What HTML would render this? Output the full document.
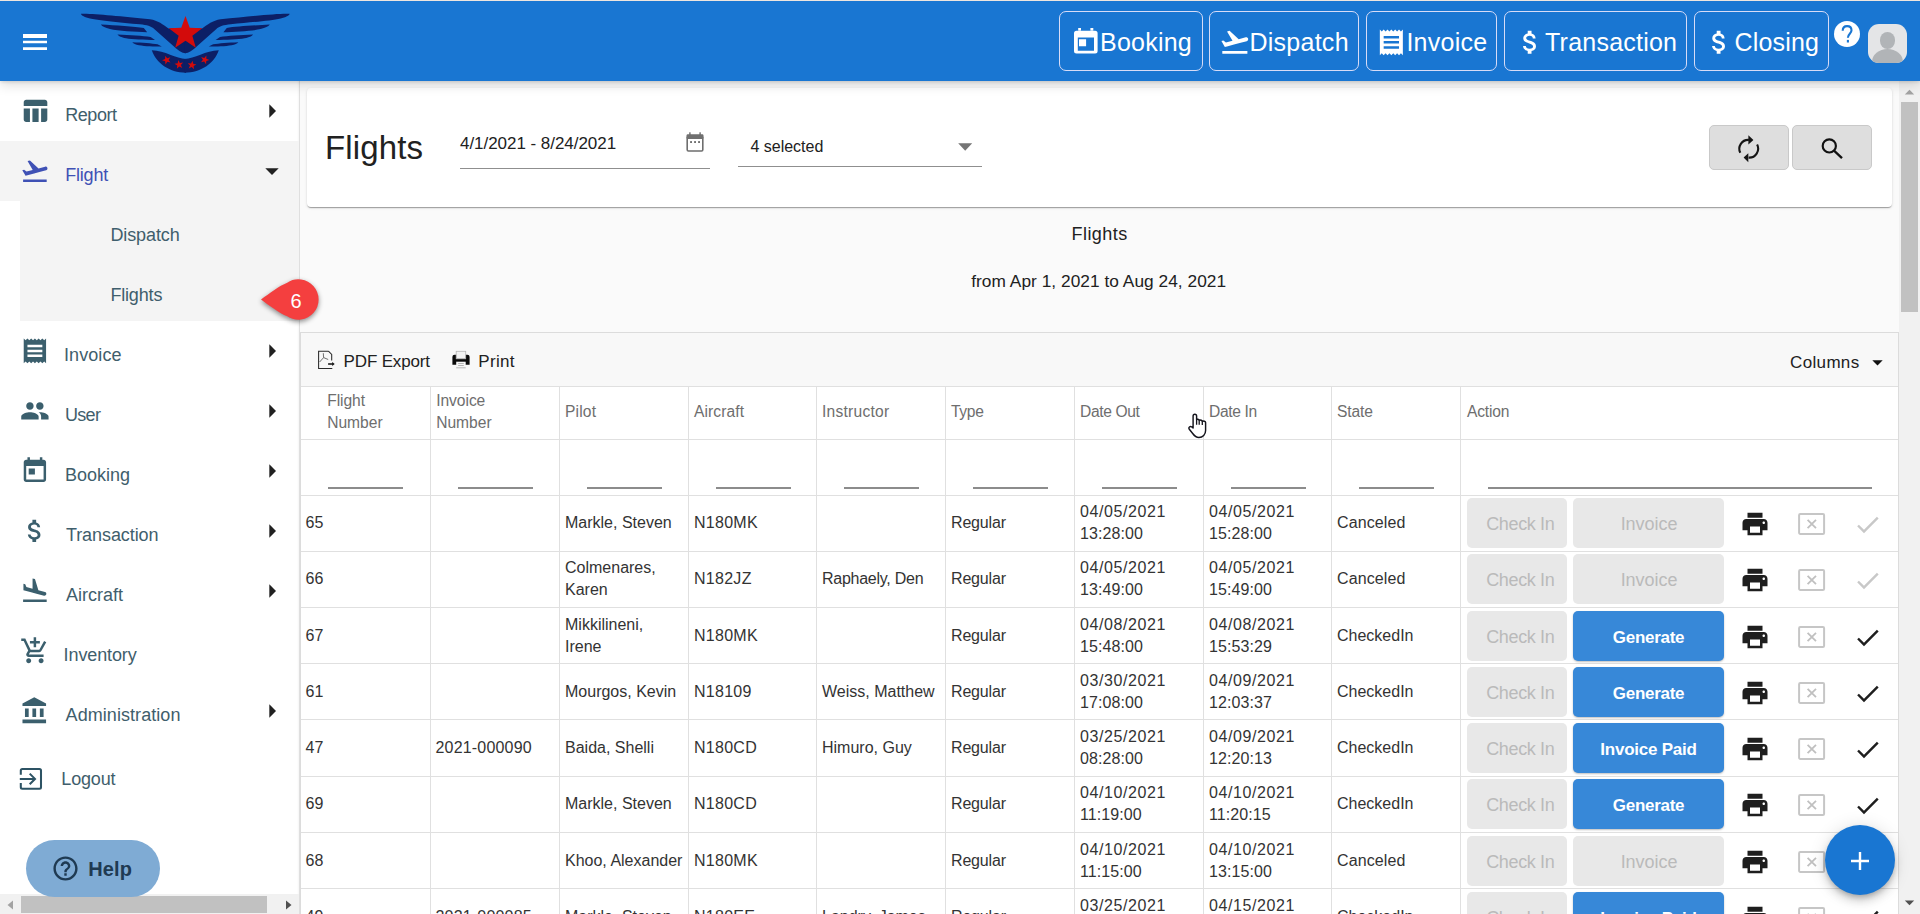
<!DOCTYPE html><html><head><meta charset="utf-8"><title>Flights</title><style>
*{box-sizing:border-box;margin:0;padding:0}
html,body{width:1920px;height:914px;overflow:hidden;background:#fafafa;font-family:"Liberation Sans",sans-serif;position:relative}
.t{position:absolute;white-space:nowrap}
.i{position:absolute;display:block}
.a{position:absolute}
</style></head><body>
<div class="a" style="left:307px;top:88px;width:1585px;height:119px;background:#fff;border-radius:4px;box-shadow:0 2px 1px -1px rgba(0,0,0,.2),0 1px 1px 0 rgba(0,0,0,.14),0 1px 3px 0 rgba(0,0,0,.12)"></div><div class="t" style="left:325.00px;top:130.76px;font-size:33px;line-height:33px;color:#212121;font-weight:400;letter-spacing:0.13px;">Flights</div><div class="t" style="left:460.00px;top:134.81px;font-size:17px;line-height:17px;color:#212121;font-weight:400;letter-spacing:-0.04px;">4/1/2021 - 8/24/2021</div><svg class="i" style="left:686px;top:132px;width:18px;height:20px" viewBox="0 0 18 20"><path d="M1.2 5.2h15.6v12.6c0 .8-.5 1.2-1.2 1.2H2.4c-.8 0-1.2-.5-1.2-1.2z" fill="none" stroke="#6e6e6e" stroke-width="1.6"/><rect x="0.6" y="2.2" width="16.8" height="4.7" rx="1" fill="#707070"/><rect x="3.2" y="0.3" width="1.4" height="3" fill="#6e6e6e"/><rect x="13.4" y="0.3" width="1.4" height="3" fill="#6e6e6e"/><rect x="4.1" y="9.1" width="1.9" height="1.9" fill="#707070"/><rect x="8.1" y="9.1" width="1.9" height="1.9" fill="#707070"/><rect x="12.1" y="9.1" width="1.9" height="1.9" fill="#707070"/></svg><div class="a" style="left:460px;top:167.5px;width:250px;height:1px;background:#8f8f8f"></div><div class="t" style="left:750.40px;top:138.95px;font-size:16px;line-height:16px;color:#212121;font-weight:400;">4 selected</div><svg class="i" style="left:958px;top:142.5px;width:14.5px;height:8px" viewBox="0 0 14.5 8"><path d="M0.2 0.2h14l-7 7.6z" fill="#757575"/></svg><div class="a" style="left:738px;top:165.5px;width:244px;height:1px;background:#8f8f8f"></div><div class="a" style="left:1709px;top:125px;width:80px;height:45px;background:#dedede;border:1px solid #c9c9c9;border-radius:5px"></div><div class="a" style="left:1792px;top:125px;width:80px;height:45px;background:#dedede;border:1px solid #c9c9c9;border-radius:5px"></div><svg class="i" style="left:1736px;top:134px;width:24px;height:30px" viewBox="0 0 24 30"><path d="M4.3,18.8 A8.9,8.9 0 0 1 12.9,5.9" fill="none" stroke="#151515" stroke-width="2.1"/><path d="M12.4,1.3 L17.4,6.1 L12.4,10.5 Z" fill="#151515"/><path d="M21.1,10.6 A8.9,8.9 0 0 1 12.6,23.6" fill="none" stroke="#151515" stroke-width="2.1"/><path d="M12.3,19.3 L7.6,23.6 L12.3,28.2 Z" fill="#151515"/></svg><svg class="i" style="left:1820px;top:137px;width:24px;height:24px" viewBox="0 0 24 24"><circle cx="9.3" cy="8.9" r="6.6" fill="none" stroke="#111" stroke-width="2.15"/><path d="M14 13.6l8 7.6" stroke="#111" stroke-width="2.3"/></svg><div class="t" style="left:799.60px;width:600px;text-align:center;top:224.96px;font-size:18px;line-height:18px;color:#212121;font-weight:400;letter-spacing:0.45px;">Flights</div><div class="t" style="left:798.70px;width:600px;text-align:center;top:272.55px;font-size:17.3px;line-height:17.3px;color:#212121;font-weight:400;letter-spacing:0.04px;">from Apr 1, 2021 to Aug 24, 2021</div>
<div class="a" style="left:300px;top:332px;width:1599px;height:600px;background:#fff;border:1px solid #dcdcdc;border-bottom:none"></div><div class="a" style="left:301px;top:333px;width:1597px;height:54px;background:#f8f8f8;border-bottom:1px solid #e0e0e0"></div><svg class="i" style="left:317px;top:350px;width:19px;height:20px" viewBox="0 0 19 20"><path d="M11.4,1.2 L14.7,4.5 V10.4 M1.6,1.2 H11.4 M1.6,0.7 V18.5 H15.3" fill="none" stroke="#2a2a2a" stroke-width="1.05"/><path d="M6.3,3.2 L6.6,7.6 L2.6,12 M6.6,7.6 L11.2,9.5" fill="none" stroke="#555" stroke-width="0.85"/><path d="M11.1,14 H15.8" stroke="#111" stroke-width="1.5"/><path d="M15.2,11.9 L17.7,14 L15.2,16.1 Z" fill="#111"/></svg><div class="t" style="left:343.60px;top:352.61px;font-size:17px;line-height:17px;color:#212121;font-weight:400;letter-spacing:-0.16px;">PDF Export</div><svg class="i" style="left:446px;top:345px;width:30px;height:30px" viewBox="0 0 30 30"><path d="M6.4,12 Q6.4,9.8 8.6,9.8 H21.4 Q23.6,9.8 23.6,12 V19.7 H6.4 Z" fill="#0a0a0a"/><rect x="10.2" y="6.3" width="9.5" height="7.5" fill="#f3f3f3" stroke="#b5b5b5" stroke-width="0.8"/><rect x="10.2" y="16.7" width="9.5" height="6.7" fill="#f6f6f6"/><path d="M12.2,18.5 H17.8 M12.2,20.5 H17.8" stroke="#9a9a9a" stroke-width="0.7"/><path d="M10.2,22.8 H19.7" stroke="#bdbdbd" stroke-width="1.1"/></svg><div class="t" style="left:478.20px;top:352.61px;font-size:17px;line-height:17px;color:#212121;font-weight:400;letter-spacing:0.35px;">Print</div><div class="t" style="left:1790.10px;top:354.21px;font-size:17px;line-height:17px;color:#212121;font-weight:400;letter-spacing:0.33px;">Columns</div><svg class="i" style="left:1871.5px;top:359.5px;width:11px;height:6px" viewBox="0 0 11 6"><path d="M0.3 0.2h10.4L5.5 5.6z" fill="#111"/></svg><div class="a" style="left:301px;top:439.0px;width:1597px;height:1px;background:#e0e0e0"></div><div class="a" style="left:301px;top:495.0px;width:1597px;height:1px;background:#e0e0e0"></div><div class="a" style="left:301px;top:551.0px;width:1597px;height:1px;background:#e0e0e0"></div><div class="a" style="left:301px;top:607.0px;width:1597px;height:1px;background:#e0e0e0"></div><div class="a" style="left:301px;top:663.0px;width:1597px;height:1px;background:#e0e0e0"></div><div class="a" style="left:301px;top:719.0px;width:1597px;height:1px;background:#e0e0e0"></div><div class="a" style="left:301px;top:776.0px;width:1597px;height:1px;background:#e0e0e0"></div><div class="a" style="left:301px;top:832.0px;width:1597px;height:1px;background:#e0e0e0"></div><div class="a" style="left:301px;top:888.0px;width:1597px;height:1px;background:#e0e0e0"></div><div class="a" style="left:301px;top:944.0px;width:1597px;height:1px;background:#e0e0e0"></div><div class="a" style="left:429.5px;top:387px;width:1px;height:530px;background:#e0e0e0"></div><div class="a" style="left:559.0px;top:387px;width:1px;height:530px;background:#e0e0e0"></div><div class="a" style="left:688.0px;top:387px;width:1px;height:530px;background:#e0e0e0"></div><div class="a" style="left:816.0px;top:387px;width:1px;height:530px;background:#e0e0e0"></div><div class="a" style="left:945.0px;top:387px;width:1px;height:530px;background:#e0e0e0"></div><div class="a" style="left:1074.0px;top:387px;width:1px;height:530px;background:#e0e0e0"></div><div class="a" style="left:1203.0px;top:387px;width:1px;height:530px;background:#e0e0e0"></div><div class="a" style="left:1331.0px;top:387px;width:1px;height:530px;background:#e0e0e0"></div><div class="a" style="left:1459.5px;top:387px;width:1px;height:530px;background:#e0e0e0"></div><div class="t" style="left:327.20px;top:393.29px;font-size:15.6px;line-height:15.6px;color:#6e6e6e;font-weight:400;letter-spacing:-0.05px;">Flight</div><div class="t" style="left:327.20px;top:414.79px;font-size:15.6px;line-height:15.6px;color:#6e6e6e;font-weight:400;letter-spacing:-0.01px;">Number</div><div class="t" style="left:436.20px;top:393.29px;font-size:15.6px;line-height:15.6px;color:#6e6e6e;font-weight:400;letter-spacing:-0.05px;">Invoice</div><div class="t" style="left:436.20px;top:414.79px;font-size:15.6px;line-height:15.6px;color:#6e6e6e;font-weight:400;letter-spacing:-0.01px;">Number</div><div class="t" style="left:565.00px;top:404.29px;font-size:15.6px;line-height:15.6px;color:#6e6e6e;font-weight:400;letter-spacing:0.17px;">Pilot</div><div class="t" style="left:694.00px;top:404.29px;font-size:15.6px;line-height:15.6px;color:#6e6e6e;font-weight:400;letter-spacing:0.09px;">Aircraft</div><div class="t" style="left:822.00px;top:404.29px;font-size:15.6px;line-height:15.6px;color:#6e6e6e;font-weight:400;letter-spacing:0.24px;">Instructor</div><div class="t" style="left:951.00px;top:404.29px;font-size:15.6px;line-height:15.6px;color:#6e6e6e;font-weight:400;letter-spacing:-0.32px;">Type</div><div class="t" style="left:1080.00px;top:404.29px;font-size:15.6px;line-height:15.6px;color:#6e6e6e;font-weight:400;letter-spacing:-0.36px;">Date Out</div><div class="t" style="left:1209.00px;top:404.29px;font-size:15.6px;line-height:15.6px;color:#6e6e6e;font-weight:400;letter-spacing:-0.35px;">Date In</div><div class="t" style="left:1337.00px;top:404.29px;font-size:15.6px;line-height:15.6px;color:#6e6e6e;font-weight:400;letter-spacing:-0.1px;">State</div><div class="t" style="left:1467.00px;top:404.29px;font-size:15.6px;line-height:15.6px;color:#6e6e6e;font-weight:400;letter-spacing:-0.2px;">Action</div><div class="a" style="left:327.5px;top:487.3px;width:75px;height:1.4px;background:#8c8c8c"></div><div class="a" style="left:457.5px;top:487.3px;width:75px;height:1.4px;background:#8c8c8c"></div><div class="a" style="left:587.0px;top:487.3px;width:75px;height:1.4px;background:#8c8c8c"></div><div class="a" style="left:716.0px;top:487.3px;width:75px;height:1.4px;background:#8c8c8c"></div><div class="a" style="left:844.0px;top:487.3px;width:75px;height:1.4px;background:#8c8c8c"></div><div class="a" style="left:973.0px;top:487.3px;width:75px;height:1.4px;background:#8c8c8c"></div><div class="a" style="left:1102.0px;top:487.3px;width:75px;height:1.4px;background:#8c8c8c"></div><div class="a" style="left:1231.0px;top:487.3px;width:75px;height:1.4px;background:#8c8c8c"></div><div class="a" style="left:1359.0px;top:487.3px;width:75px;height:1.4px;background:#8c8c8c"></div><div class="a" style="left:1487.5px;top:487.3px;width:384.5px;height:1.4px;background:#8c8c8c"></div><div class="t" style="left:305.50px;top:514.85px;font-size:16px;line-height:16px;color:#333333;font-weight:400;letter-spacing:0px;">65</div><div class="t" style="left:565.00px;top:514.85px;font-size:16px;line-height:16px;color:#333333;font-weight:400;letter-spacing:0px;">Markle, Steven</div><div class="t" style="left:694.00px;top:514.85px;font-size:16px;line-height:16px;color:#333333;font-weight:400;letter-spacing:0.28px;">N180MK</div><div class="t" style="left:951.00px;top:514.85px;font-size:16px;line-height:16px;color:#333333;font-weight:400;letter-spacing:-0.17px;">Regular</div><div class="t" style="left:1080.00px;top:503.85px;font-size:16px;line-height:16px;color:#333333;font-weight:400;letter-spacing:0.6px;">04/05/2021</div><div class="t" style="left:1080.00px;top:525.85px;font-size:16px;line-height:16px;color:#333333;font-weight:400;letter-spacing:0.09px;">13:28:00</div><div class="t" style="left:1209.00px;top:503.85px;font-size:16px;line-height:16px;color:#333333;font-weight:400;letter-spacing:0.6px;">04/05/2021</div><div class="t" style="left:1209.00px;top:525.85px;font-size:16px;line-height:16px;color:#333333;font-weight:400;letter-spacing:0.09px;">15:28:00</div><div class="t" style="left:1337.00px;top:514.85px;font-size:16px;line-height:16px;color:#333333;font-weight:400;letter-spacing:0.1px;">Canceled</div><div class="a" style="left:1467px;top:497.8px;width:100px;height:50.3px;background:#e8e8e8;border-radius:5px"></div><div class="t" style="left:1470.30px;width:100px;text-align:center;top:515.16px;font-size:18px;line-height:18px;color:#bababa;font-weight:400;letter-spacing:-0.34px;">Check In</div><div class="a" style="left:1573px;top:497.8px;width:151px;height:50.3px;background:#e8e8e8;border-radius:5px"></div><div class="t" style="left:1573.50px;width:151px;text-align:center;top:515.16px;font-size:18px;line-height:18px;color:#bababa;font-weight:400;letter-spacing:-0.05px;">Invoice</div><svg class="i" style="left:1740.00px;top:509.25px;width:30px;height:30px;" viewBox="0 0 24 24"><path fill="#1e1e1e" d="M19 8H5c-1.66 0-3 1.34-3 3v6h4v4h12v-4h4v-6c0-1.66-1.34-3-3-3zm-3 11H8v-5h8v5zm3-7c-.55 0-1-.45-1-1s.45-1 1-1 1 .45 1 1-.45 1-1 1zm-1-9H6v4h12V3z"/></svg><svg class="i" style="left:1797.5px;top:513.2px;width:28px;height:22px" viewBox="0 0 28 22"><rect x="1.1" y="1" width="25" height="20" rx="1.2" fill="none" stroke="#c6c6c6" stroke-width="2"/><path d="M9.6 6.8l8.4 8.4M18 6.8l-8.4 8.4" stroke="#c0c0c0" stroke-width="1.8"/></svg><svg class="i" style="left:1853.30px;top:509.50px;width:29.3px;height:29.3px;" viewBox="0 0 24 24"><path fill="#c8c8c8" d="M9 16.17L4.83 12l-1.42 1.41L9 19 21 7l-1.41-1.41z"/></svg><div class="t" style="left:305.50px;top:570.85px;font-size:16px;line-height:16px;color:#333333;font-weight:400;letter-spacing:0px;">66</div><div class="t" style="left:565.00px;top:559.85px;font-size:16px;line-height:16px;color:#333333;font-weight:400;">Colmenares,</div><div class="t" style="left:565.00px;top:581.85px;font-size:16px;line-height:16px;color:#333333;font-weight:400;">Karen</div><div class="t" style="left:694.00px;top:570.85px;font-size:16px;line-height:16px;color:#333333;font-weight:400;letter-spacing:0.28px;">N182JZ</div><div class="t" style="left:822.00px;top:570.85px;font-size:16px;line-height:16px;color:#333333;font-weight:400;letter-spacing:-0.26px;">Raphaely, Den</div><div class="t" style="left:951.00px;top:570.85px;font-size:16px;line-height:16px;color:#333333;font-weight:400;letter-spacing:-0.17px;">Regular</div><div class="t" style="left:1080.00px;top:559.85px;font-size:16px;line-height:16px;color:#333333;font-weight:400;letter-spacing:0.6px;">04/05/2021</div><div class="t" style="left:1080.00px;top:581.85px;font-size:16px;line-height:16px;color:#333333;font-weight:400;letter-spacing:0.09px;">13:49:00</div><div class="t" style="left:1209.00px;top:559.85px;font-size:16px;line-height:16px;color:#333333;font-weight:400;letter-spacing:0.6px;">04/05/2021</div><div class="t" style="left:1209.00px;top:581.85px;font-size:16px;line-height:16px;color:#333333;font-weight:400;letter-spacing:0.09px;">15:49:00</div><div class="t" style="left:1337.00px;top:570.85px;font-size:16px;line-height:16px;color:#333333;font-weight:400;letter-spacing:0.1px;">Canceled</div><div class="a" style="left:1467px;top:553.8px;width:100px;height:50.3px;background:#e8e8e8;border-radius:5px"></div><div class="t" style="left:1470.30px;width:100px;text-align:center;top:571.16px;font-size:18px;line-height:18px;color:#bababa;font-weight:400;letter-spacing:-0.34px;">Check In</div><div class="a" style="left:1573px;top:553.8px;width:151px;height:50.3px;background:#e8e8e8;border-radius:5px"></div><div class="t" style="left:1573.50px;width:151px;text-align:center;top:571.16px;font-size:18px;line-height:18px;color:#bababa;font-weight:400;letter-spacing:-0.05px;">Invoice</div><svg class="i" style="left:1740.00px;top:565.25px;width:30px;height:30px;" viewBox="0 0 24 24"><path fill="#1e1e1e" d="M19 8H5c-1.66 0-3 1.34-3 3v6h4v4h12v-4h4v-6c0-1.66-1.34-3-3-3zm-3 11H8v-5h8v5zm3-7c-.55 0-1-.45-1-1s.45-1 1-1 1 .45 1 1-.45 1-1 1zm-1-9H6v4h12V3z"/></svg><svg class="i" style="left:1797.5px;top:569.2px;width:28px;height:22px" viewBox="0 0 28 22"><rect x="1.1" y="1" width="25" height="20" rx="1.2" fill="none" stroke="#c6c6c6" stroke-width="2"/><path d="M9.6 6.8l8.4 8.4M18 6.8l-8.4 8.4" stroke="#c0c0c0" stroke-width="1.8"/></svg><svg class="i" style="left:1853.30px;top:565.50px;width:29.3px;height:29.3px;" viewBox="0 0 24 24"><path fill="#c8c8c8" d="M9 16.17L4.83 12l-1.42 1.41L9 19 21 7l-1.41-1.41z"/></svg><div class="t" style="left:305.50px;top:627.85px;font-size:16px;line-height:16px;color:#333333;font-weight:400;letter-spacing:0px;">67</div><div class="t" style="left:565.00px;top:616.85px;font-size:16px;line-height:16px;color:#333333;font-weight:400;">Mikkilineni,</div><div class="t" style="left:565.00px;top:638.85px;font-size:16px;line-height:16px;color:#333333;font-weight:400;">Irene</div><div class="t" style="left:694.00px;top:627.85px;font-size:16px;line-height:16px;color:#333333;font-weight:400;letter-spacing:0.28px;">N180MK</div><div class="t" style="left:951.00px;top:627.85px;font-size:16px;line-height:16px;color:#333333;font-weight:400;letter-spacing:-0.17px;">Regular</div><div class="t" style="left:1080.00px;top:616.85px;font-size:16px;line-height:16px;color:#333333;font-weight:400;letter-spacing:0.6px;">04/08/2021</div><div class="t" style="left:1080.00px;top:638.85px;font-size:16px;line-height:16px;color:#333333;font-weight:400;letter-spacing:0.09px;">15:48:00</div><div class="t" style="left:1209.00px;top:616.85px;font-size:16px;line-height:16px;color:#333333;font-weight:400;letter-spacing:0.6px;">04/08/2021</div><div class="t" style="left:1209.00px;top:638.85px;font-size:16px;line-height:16px;color:#333333;font-weight:400;letter-spacing:0.09px;">15:53:29</div><div class="t" style="left:1337.00px;top:627.85px;font-size:16px;line-height:16px;color:#333333;font-weight:400;letter-spacing:0px;">CheckedIn</div><div class="a" style="left:1467px;top:610.8px;width:100px;height:50.3px;background:#e8e8e8;border-radius:5px"></div><div class="t" style="left:1470.30px;width:100px;text-align:center;top:628.16px;font-size:18px;line-height:18px;color:#bababa;font-weight:400;letter-spacing:-0.34px;">Check In</div><div class="a" style="left:1573px;top:610.8px;width:151px;height:50.3px;background:#3788d8;border-radius:5px;box-shadow:0 1px 2px rgba(0,0,0,.25)"></div><div class="t" style="left:1573.00px;width:151px;text-align:center;top:628.61px;font-size:17px;line-height:17px;color:#ffffff;font-weight:700;letter-spacing:-0.29px;">Generate</div><svg class="i" style="left:1740.00px;top:622.25px;width:30px;height:30px;" viewBox="0 0 24 24"><path fill="#1e1e1e" d="M19 8H5c-1.66 0-3 1.34-3 3v6h4v4h12v-4h4v-6c0-1.66-1.34-3-3-3zm-3 11H8v-5h8v5zm3-7c-.55 0-1-.45-1-1s.45-1 1-1 1 .45 1 1-.45 1-1 1zm-1-9H6v4h12V3z"/></svg><svg class="i" style="left:1797.5px;top:626.2px;width:28px;height:22px" viewBox="0 0 28 22"><rect x="1.1" y="1" width="25" height="20" rx="1.2" fill="none" stroke="#c6c6c6" stroke-width="2"/><path d="M9.6 6.8l8.4 8.4M18 6.8l-8.4 8.4" stroke="#c0c0c0" stroke-width="1.8"/></svg><svg class="i" style="left:1853.30px;top:622.50px;width:29.3px;height:29.3px;" viewBox="0 0 24 24"><path fill="#1e1e1e" d="M9 16.17L4.83 12l-1.42 1.41L9 19 21 7l-1.41-1.41z"/></svg><div class="t" style="left:305.50px;top:683.85px;font-size:16px;line-height:16px;color:#333333;font-weight:400;letter-spacing:0px;">61</div><div class="t" style="left:565.00px;top:683.85px;font-size:16px;line-height:16px;color:#333333;font-weight:400;letter-spacing:0px;">Mourgos, Kevin</div><div class="t" style="left:694.00px;top:683.85px;font-size:16px;line-height:16px;color:#333333;font-weight:400;letter-spacing:0.28px;">N18109</div><div class="t" style="left:822.00px;top:683.85px;font-size:16px;line-height:16px;color:#333333;font-weight:400;letter-spacing:0px;">Weiss, Matthew</div><div class="t" style="left:951.00px;top:683.85px;font-size:16px;line-height:16px;color:#333333;font-weight:400;letter-spacing:-0.17px;">Regular</div><div class="t" style="left:1080.00px;top:672.85px;font-size:16px;line-height:16px;color:#333333;font-weight:400;letter-spacing:0.6px;">03/30/2021</div><div class="t" style="left:1080.00px;top:694.85px;font-size:16px;line-height:16px;color:#333333;font-weight:400;letter-spacing:0.09px;">17:08:00</div><div class="t" style="left:1209.00px;top:672.85px;font-size:16px;line-height:16px;color:#333333;font-weight:400;letter-spacing:0.6px;">04/09/2021</div><div class="t" style="left:1209.00px;top:694.85px;font-size:16px;line-height:16px;color:#333333;font-weight:400;letter-spacing:0.09px;">12:03:37</div><div class="t" style="left:1337.00px;top:683.85px;font-size:16px;line-height:16px;color:#333333;font-weight:400;letter-spacing:0px;">CheckedIn</div><div class="a" style="left:1467px;top:666.8px;width:100px;height:50.3px;background:#e8e8e8;border-radius:5px"></div><div class="t" style="left:1470.30px;width:100px;text-align:center;top:684.16px;font-size:18px;line-height:18px;color:#bababa;font-weight:400;letter-spacing:-0.34px;">Check In</div><div class="a" style="left:1573px;top:666.8px;width:151px;height:50.3px;background:#3788d8;border-radius:5px;box-shadow:0 1px 2px rgba(0,0,0,.25)"></div><div class="t" style="left:1573.00px;width:151px;text-align:center;top:684.61px;font-size:17px;line-height:17px;color:#ffffff;font-weight:700;letter-spacing:-0.29px;">Generate</div><svg class="i" style="left:1740.00px;top:678.25px;width:30px;height:30px;" viewBox="0 0 24 24"><path fill="#1e1e1e" d="M19 8H5c-1.66 0-3 1.34-3 3v6h4v4h12v-4h4v-6c0-1.66-1.34-3-3-3zm-3 11H8v-5h8v5zm3-7c-.55 0-1-.45-1-1s.45-1 1-1 1 .45 1 1-.45 1-1 1zm-1-9H6v4h12V3z"/></svg><svg class="i" style="left:1797.5px;top:682.2px;width:28px;height:22px" viewBox="0 0 28 22"><rect x="1.1" y="1" width="25" height="20" rx="1.2" fill="none" stroke="#c6c6c6" stroke-width="2"/><path d="M9.6 6.8l8.4 8.4M18 6.8l-8.4 8.4" stroke="#c0c0c0" stroke-width="1.8"/></svg><svg class="i" style="left:1853.30px;top:678.50px;width:29.3px;height:29.3px;" viewBox="0 0 24 24"><path fill="#1e1e1e" d="M9 16.17L4.83 12l-1.42 1.41L9 19 21 7l-1.41-1.41z"/></svg><div class="t" style="left:305.50px;top:739.85px;font-size:16px;line-height:16px;color:#333333;font-weight:400;letter-spacing:0px;">47</div><div class="t" style="left:435.50px;top:739.85px;font-size:16px;line-height:16px;color:#333333;font-weight:400;letter-spacing:0.18px;">2021-000090</div><div class="t" style="left:565.00px;top:739.85px;font-size:16px;line-height:16px;color:#333333;font-weight:400;letter-spacing:0px;">Baida, Shelli</div><div class="t" style="left:694.00px;top:739.85px;font-size:16px;line-height:16px;color:#333333;font-weight:400;letter-spacing:0.28px;">N180CD</div><div class="t" style="left:822.00px;top:739.85px;font-size:16px;line-height:16px;color:#333333;font-weight:400;letter-spacing:0px;">Himuro, Guy</div><div class="t" style="left:951.00px;top:739.85px;font-size:16px;line-height:16px;color:#333333;font-weight:400;letter-spacing:-0.17px;">Regular</div><div class="t" style="left:1080.00px;top:728.85px;font-size:16px;line-height:16px;color:#333333;font-weight:400;letter-spacing:0.6px;">03/25/2021</div><div class="t" style="left:1080.00px;top:750.85px;font-size:16px;line-height:16px;color:#333333;font-weight:400;letter-spacing:0.09px;">08:28:00</div><div class="t" style="left:1209.00px;top:728.85px;font-size:16px;line-height:16px;color:#333333;font-weight:400;letter-spacing:0.6px;">04/09/2021</div><div class="t" style="left:1209.00px;top:750.85px;font-size:16px;line-height:16px;color:#333333;font-weight:400;letter-spacing:0.09px;">12:20:13</div><div class="t" style="left:1337.00px;top:739.85px;font-size:16px;line-height:16px;color:#333333;font-weight:400;letter-spacing:0px;">CheckedIn</div><div class="a" style="left:1467px;top:722.8px;width:100px;height:50.3px;background:#e8e8e8;border-radius:5px"></div><div class="t" style="left:1470.30px;width:100px;text-align:center;top:740.16px;font-size:18px;line-height:18px;color:#bababa;font-weight:400;letter-spacing:-0.34px;">Check In</div><div class="a" style="left:1573px;top:722.8px;width:151px;height:50.3px;background:#3788d8;border-radius:5px;box-shadow:0 1px 2px rgba(0,0,0,.25)"></div><div class="t" style="left:1573.00px;width:151px;text-align:center;top:740.61px;font-size:17px;line-height:17px;color:#ffffff;font-weight:700;letter-spacing:-0.23px;">Invoice Paid</div><svg class="i" style="left:1740.00px;top:734.25px;width:30px;height:30px;" viewBox="0 0 24 24"><path fill="#1e1e1e" d="M19 8H5c-1.66 0-3 1.34-3 3v6h4v4h12v-4h4v-6c0-1.66-1.34-3-3-3zm-3 11H8v-5h8v5zm3-7c-.55 0-1-.45-1-1s.45-1 1-1 1 .45 1 1-.45 1-1 1zm-1-9H6v4h12V3z"/></svg><svg class="i" style="left:1797.5px;top:738.2px;width:28px;height:22px" viewBox="0 0 28 22"><rect x="1.1" y="1" width="25" height="20" rx="1.2" fill="none" stroke="#c6c6c6" stroke-width="2"/><path d="M9.6 6.8l8.4 8.4M18 6.8l-8.4 8.4" stroke="#c0c0c0" stroke-width="1.8"/></svg><svg class="i" style="left:1853.30px;top:734.50px;width:29.3px;height:29.3px;" viewBox="0 0 24 24"><path fill="#1e1e1e" d="M9 16.17L4.83 12l-1.42 1.41L9 19 21 7l-1.41-1.41z"/></svg><div class="t" style="left:305.50px;top:795.85px;font-size:16px;line-height:16px;color:#333333;font-weight:400;letter-spacing:0px;">69</div><div class="t" style="left:565.00px;top:795.85px;font-size:16px;line-height:16px;color:#333333;font-weight:400;letter-spacing:0px;">Markle, Steven</div><div class="t" style="left:694.00px;top:795.85px;font-size:16px;line-height:16px;color:#333333;font-weight:400;letter-spacing:0.28px;">N180CD</div><div class="t" style="left:951.00px;top:795.85px;font-size:16px;line-height:16px;color:#333333;font-weight:400;letter-spacing:-0.17px;">Regular</div><div class="t" style="left:1080.00px;top:784.85px;font-size:16px;line-height:16px;color:#333333;font-weight:400;letter-spacing:0.6px;">04/10/2021</div><div class="t" style="left:1080.00px;top:806.85px;font-size:16px;line-height:16px;color:#333333;font-weight:400;letter-spacing:0.09px;">11:19:00</div><div class="t" style="left:1209.00px;top:784.85px;font-size:16px;line-height:16px;color:#333333;font-weight:400;letter-spacing:0.6px;">04/10/2021</div><div class="t" style="left:1209.00px;top:806.85px;font-size:16px;line-height:16px;color:#333333;font-weight:400;letter-spacing:0.09px;">11:20:15</div><div class="t" style="left:1337.00px;top:795.85px;font-size:16px;line-height:16px;color:#333333;font-weight:400;letter-spacing:0px;">CheckedIn</div><div class="a" style="left:1467px;top:778.8px;width:100px;height:50.3px;background:#e8e8e8;border-radius:5px"></div><div class="t" style="left:1470.30px;width:100px;text-align:center;top:796.16px;font-size:18px;line-height:18px;color:#bababa;font-weight:400;letter-spacing:-0.34px;">Check In</div><div class="a" style="left:1573px;top:778.8px;width:151px;height:50.3px;background:#3788d8;border-radius:5px;box-shadow:0 1px 2px rgba(0,0,0,.25)"></div><div class="t" style="left:1573.00px;width:151px;text-align:center;top:796.61px;font-size:17px;line-height:17px;color:#ffffff;font-weight:700;letter-spacing:-0.29px;">Generate</div><svg class="i" style="left:1740.00px;top:790.25px;width:30px;height:30px;" viewBox="0 0 24 24"><path fill="#1e1e1e" d="M19 8H5c-1.66 0-3 1.34-3 3v6h4v4h12v-4h4v-6c0-1.66-1.34-3-3-3zm-3 11H8v-5h8v5zm3-7c-.55 0-1-.45-1-1s.45-1 1-1 1 .45 1 1-.45 1-1 1zm-1-9H6v4h12V3z"/></svg><svg class="i" style="left:1797.5px;top:794.2px;width:28px;height:22px" viewBox="0 0 28 22"><rect x="1.1" y="1" width="25" height="20" rx="1.2" fill="none" stroke="#c6c6c6" stroke-width="2"/><path d="M9.6 6.8l8.4 8.4M18 6.8l-8.4 8.4" stroke="#c0c0c0" stroke-width="1.8"/></svg><svg class="i" style="left:1853.30px;top:790.50px;width:29.3px;height:29.3px;" viewBox="0 0 24 24"><path fill="#1e1e1e" d="M9 16.17L4.83 12l-1.42 1.41L9 19 21 7l-1.41-1.41z"/></svg><div class="t" style="left:305.50px;top:852.85px;font-size:16px;line-height:16px;color:#333333;font-weight:400;letter-spacing:0px;">68</div><div class="t" style="left:565.00px;top:852.85px;font-size:16px;line-height:16px;color:#333333;font-weight:400;letter-spacing:0px;">Khoo, Alexander</div><div class="t" style="left:694.00px;top:852.85px;font-size:16px;line-height:16px;color:#333333;font-weight:400;letter-spacing:0.28px;">N180MK</div><div class="t" style="left:951.00px;top:852.85px;font-size:16px;line-height:16px;color:#333333;font-weight:400;letter-spacing:-0.17px;">Regular</div><div class="t" style="left:1080.00px;top:841.85px;font-size:16px;line-height:16px;color:#333333;font-weight:400;letter-spacing:0.6px;">04/10/2021</div><div class="t" style="left:1080.00px;top:863.85px;font-size:16px;line-height:16px;color:#333333;font-weight:400;letter-spacing:0.09px;">11:15:00</div><div class="t" style="left:1209.00px;top:841.85px;font-size:16px;line-height:16px;color:#333333;font-weight:400;letter-spacing:0.6px;">04/10/2021</div><div class="t" style="left:1209.00px;top:863.85px;font-size:16px;line-height:16px;color:#333333;font-weight:400;letter-spacing:0.09px;">13:15:00</div><div class="t" style="left:1337.00px;top:852.85px;font-size:16px;line-height:16px;color:#333333;font-weight:400;letter-spacing:0.1px;">Canceled</div><div class="a" style="left:1467px;top:835.8px;width:100px;height:50.3px;background:#e8e8e8;border-radius:5px"></div><div class="t" style="left:1470.30px;width:100px;text-align:center;top:853.16px;font-size:18px;line-height:18px;color:#bababa;font-weight:400;letter-spacing:-0.34px;">Check In</div><div class="a" style="left:1573px;top:835.8px;width:151px;height:50.3px;background:#e8e8e8;border-radius:5px"></div><div class="t" style="left:1573.50px;width:151px;text-align:center;top:853.16px;font-size:18px;line-height:18px;color:#bababa;font-weight:400;letter-spacing:-0.05px;">Invoice</div><svg class="i" style="left:1740.00px;top:847.25px;width:30px;height:30px;" viewBox="0 0 24 24"><path fill="#1e1e1e" d="M19 8H5c-1.66 0-3 1.34-3 3v6h4v4h12v-4h4v-6c0-1.66-1.34-3-3-3zm-3 11H8v-5h8v5zm3-7c-.55 0-1-.45-1-1s.45-1 1-1 1 .45 1 1-.45 1-1 1zm-1-9H6v4h12V3z"/></svg><svg class="i" style="left:1797.5px;top:851.2px;width:28px;height:22px" viewBox="0 0 28 22"><rect x="1.1" y="1" width="25" height="20" rx="1.2" fill="none" stroke="#c6c6c6" stroke-width="2"/><path d="M9.6 6.8l8.4 8.4M18 6.8l-8.4 8.4" stroke="#c0c0c0" stroke-width="1.8"/></svg><svg class="i" style="left:1853.30px;top:847.50px;width:29.3px;height:29.3px;" viewBox="0 0 24 24"><path fill="#1e1e1e" d="M9 16.17L4.83 12l-1.42 1.41L9 19 21 7l-1.41-1.41z"/></svg><div class="t" style="left:305.50px;top:908.85px;font-size:16px;line-height:16px;color:#333333;font-weight:400;letter-spacing:0px;">49</div><div class="t" style="left:435.50px;top:908.85px;font-size:16px;line-height:16px;color:#333333;font-weight:400;letter-spacing:0.18px;">2021-000085</div><div class="t" style="left:565.00px;top:908.85px;font-size:16px;line-height:16px;color:#333333;font-weight:400;letter-spacing:0px;">Markle, Steven</div><div class="t" style="left:694.00px;top:908.85px;font-size:16px;line-height:16px;color:#333333;font-weight:400;letter-spacing:0.28px;">N180EE</div><div class="t" style="left:822.00px;top:908.85px;font-size:16px;line-height:16px;color:#333333;font-weight:400;letter-spacing:0px;">Landry, James</div><div class="t" style="left:951.00px;top:908.85px;font-size:16px;line-height:16px;color:#333333;font-weight:400;letter-spacing:-0.17px;">Regular</div><div class="t" style="left:1080.00px;top:897.85px;font-size:16px;line-height:16px;color:#333333;font-weight:400;letter-spacing:0.6px;">03/25/2021</div><div class="t" style="left:1080.00px;top:919.85px;font-size:16px;line-height:16px;color:#333333;font-weight:400;letter-spacing:0.09px;">08:28:00</div><div class="t" style="left:1209.00px;top:897.85px;font-size:16px;line-height:16px;color:#333333;font-weight:400;letter-spacing:0.6px;">04/15/2021</div><div class="t" style="left:1209.00px;top:919.85px;font-size:16px;line-height:16px;color:#333333;font-weight:400;letter-spacing:0.09px;">12:20:13</div><div class="t" style="left:1337.00px;top:908.85px;font-size:16px;line-height:16px;color:#333333;font-weight:400;letter-spacing:0px;">CheckedIn</div><div class="a" style="left:1467px;top:891.8px;width:100px;height:50.3px;background:#e8e8e8;border-radius:5px"></div><div class="t" style="left:1470.30px;width:100px;text-align:center;top:909.16px;font-size:18px;line-height:18px;color:#bababa;font-weight:400;letter-spacing:-0.34px;">Check In</div><div class="a" style="left:1573px;top:891.8px;width:151px;height:50.3px;background:#3788d8;border-radius:5px;box-shadow:0 1px 2px rgba(0,0,0,.25)"></div><div class="t" style="left:1573.00px;width:151px;text-align:center;top:909.61px;font-size:17px;line-height:17px;color:#ffffff;font-weight:700;letter-spacing:-0.23px;">Invoice Paid</div><svg class="i" style="left:1740.00px;top:903.25px;width:30px;height:30px;" viewBox="0 0 24 24"><path fill="#1e1e1e" d="M19 8H5c-1.66 0-3 1.34-3 3v6h4v4h12v-4h4v-6c0-1.66-1.34-3-3-3zm-3 11H8v-5h8v5zm3-7c-.55 0-1-.45-1-1s.45-1 1-1 1 .45 1 1-.45 1-1 1zm-1-9H6v4h12V3z"/></svg><svg class="i" style="left:1797.5px;top:907.2px;width:28px;height:22px" viewBox="0 0 28 22"><rect x="1.1" y="1" width="25" height="20" rx="1.2" fill="none" stroke="#c6c6c6" stroke-width="2"/><path d="M9.6 6.8l8.4 8.4M18 6.8l-8.4 8.4" stroke="#c0c0c0" stroke-width="1.8"/></svg><svg class="i" style="left:1853.30px;top:903.50px;width:29.3px;height:29.3px;" viewBox="0 0 24 24"><path fill="#1e1e1e" d="M9 16.17L4.83 12l-1.42 1.41L9 19 21 7l-1.41-1.41z"/></svg>
<div class="a" style="left:0;top:81px;width:300px;height:833px;background:#fff;border-right:1px solid #dfdfdf;box-shadow:inset -2px 0 2px -1px rgba(0,0,0,.04)"></div>
<div class="a" style="left:0;top:141px;width:299px;height:60px;background:#f4f4f4"></div><div class="a" style="left:20px;top:201px;width:279px;height:120px;background:#f4f4f4"></div><svg class="i" style="left:20.30px;top:95.80px;width:29.8px;height:29.8px;" viewBox="0 0 24 24"><path fill="#3b5f6d" d="M10 10.02h5V21h-5zM17 21h3c1.1 0 2-.9 2-2v-9h-5v11zm3-18H5c-1.1 0-2 .9-2 2v3h19V5c0-1.1-.9-2-2-2zM3 19c0 1.1.9 2 2 2h3V10H3v9z"/></svg><div class="t" style="left:65.20px;top:106.16px;font-size:18px;line-height:18px;color:#3f5e6c;font-weight:400;letter-spacing:-0.44px;">Report</div><svg class="i" style="left:255.50px;top:95.00px;width:32px;height:32px;" viewBox="0 0 24 24"><path fill="#212121" d="M10 17l5-5-5-5v10z"/></svg><svg class="i" style="left:20.30px;top:155.80px;width:29.8px;height:29.8px;" viewBox="0 0 24 24"><path fill="#3f51b5" d="M2.5 19h19v2h-19zm19.57-9.36c-.21-.8-1.04-1.28-1.84-1.06L14.92 10l-6.9-6.43-1.93.51 4.14 7.17-4.97 1.33-1.97-1.54-1.45.39 1.82 3.16.77 1.33 1.6-.43 5.31-1.42 4.35-1.16L21 11.49c.81-.23 1.28-1.05 1.07-1.85z"/></svg><div class="t" style="left:65.20px;top:166.16px;font-size:18px;line-height:18px;color:#3f51b5;font-weight:400;letter-spacing:-0.2px;">Flight</div><svg class="i" style="left:256.00px;top:155.00px;width:32px;height:32px;" viewBox="0 0 24 24"><path fill="#212121" d="M7 10l5 5 5-5z"/></svg><svg class="i" style="left:20.30px;top:335.80px;width:29.8px;height:29.8px;" viewBox="0 0 24 24"><path fill="#3b5f6d" d="M18 17H6v-2h12v2zm0-4H6v-2h12v2zm0-4H6V7h12v2zM3 22l1.5-1.5L6 22l1.5-1.5L9 22l1.5-1.5L12 22l1.5-1.5L15 22l1.5-1.5L18 22l1.5-1.5L21 22V2l-1.5 1.5L18 2l-1.5 1.5L15 2l-1.5 1.5L12 2l-1.5 1.5L9 2 7.5 3.5 6 2 4.5 3.5 3 2v20z"/></svg><div class="t" style="left:64.00px;top:346.16px;font-size:18px;line-height:18px;color:#3f5e6c;font-weight:400;letter-spacing:0.08px;">Invoice</div><svg class="i" style="left:255.50px;top:335.00px;width:32px;height:32px;" viewBox="0 0 24 24"><path fill="#212121" d="M10 17l5-5-5-5v10z"/></svg><svg class="i" style="left:20.30px;top:395.80px;width:29.8px;height:29.8px;" viewBox="0 0 24 24"><path fill="#3b5f6d" d="M16 11c1.66 0 2.99-1.34 2.99-3S17.66 5 16 5c-1.66 0-3 1.34-3 3s1.34 3 3 3zm-8 0c1.66 0 2.99-1.34 2.99-3S9.66 5 8 5C6.34 5 5 6.34 5 8s1.34 3 3 3zm0 2c-2.33 0-7 1.17-7 3.5V19h14v-2.5c0-2.33-4.67-3.5-7-3.5zm8 0c-.29 0-.62.02-.97.05 1.16.84 1.97 1.97 1.97 3.45V19h6v-2.5c0-2.33-4.67-3.5-7-3.5z"/></svg><div class="t" style="left:65.00px;top:406.16px;font-size:18px;line-height:18px;color:#3f5e6c;font-weight:400;letter-spacing:-0.7px;">User</div><svg class="i" style="left:255.50px;top:395.00px;width:32px;height:32px;" viewBox="0 0 24 24"><path fill="#212121" d="M10 17l5-5-5-5v10z"/></svg><svg class="i" style="left:20.30px;top:455.80px;width:29.8px;height:29.8px;" viewBox="0 0 24 24"><path fill="#3b5f6d" d="M19 3h-1V1h-2v2H8V1H6v2H5c-1.11 0-1.99.9-1.99 2L3 19c0 1.1.89 2 2 2h14c1.1 0 2-.9 2-2V5c0-1.1-.9-2-2-2zm0 16H5V8h14v11zM7 10h5v5H7z"/></svg><div class="t" style="left:65.00px;top:466.16px;font-size:18px;line-height:18px;color:#3f5e6c;font-weight:400;letter-spacing:0px;">Booking</div><svg class="i" style="left:255.50px;top:455.00px;width:32px;height:32px;" viewBox="0 0 24 24"><path fill="#212121" d="M10 17l5-5-5-5v10z"/></svg><svg class="i" style="left:20.30px;top:515.80px;width:29.8px;height:29.8px;" viewBox="0 0 24 24"><path fill="#3b5f6d" d="M11.8 10.9c-2.27-.59-3-1.2-3-2.15 0-1.09 1.01-1.85 2.7-1.85 1.78 0 2.44.85 2.5 2.1h2.21c-.07-1.72-1.12-3.3-3.21-3.81V3h-3v2.16c-1.94.42-3.5 1.68-3.5 3.61 0 2.31 1.91 3.46 4.7 4.13 2.5.6 3 1.48 3 2.41 0 .69-.49 1.79-2.7 1.79-2.06 0-2.87-.92-2.98-2.1h-2.2c.12 2.19 1.76 3.42 3.68 3.83V21h3v-2.15c1.95-.37 3.5-1.5 3.5-3.55 0-2.84-2.43-3.81-4.7-4.4z"/></svg><div class="t" style="left:65.90px;top:526.16px;font-size:18px;line-height:18px;color:#3f5e6c;font-weight:400;letter-spacing:-0.07px;">Transaction</div><svg class="i" style="left:255.50px;top:515.00px;width:32px;height:32px;" viewBox="0 0 24 24"><path fill="#212121" d="M10 17l5-5-5-5v10z"/></svg><svg class="i" style="left:20.30px;top:575.80px;width:29.8px;height:29.8px;" viewBox="0 0 24 24"><path fill="#3b5f6d" d="M2.5 19h19v2h-19zm7.18-5.73l4.35 1.16 5.31 1.42c.8.21 1.62-.26 1.84-1.06.21-.8-.26-1.62-1.06-1.84l-5.31-1.42-2.76-9.02L10.12 2v8.28L5.15 8.95l-.93-2.32-1.45-.39v5.17l1.6.43 5.31 1.43z"/></svg><div class="t" style="left:65.90px;top:586.16px;font-size:18px;line-height:18px;color:#3f5e6c;font-weight:400;letter-spacing:0px;">Aircraft</div><svg class="i" style="left:255.50px;top:575.00px;width:32px;height:32px;" viewBox="0 0 24 24"><path fill="#212121" d="M10 17l5-5-5-5v10z"/></svg><svg class="i" style="left:20.30px;top:635.80px;width:29.8px;height:29.8px;" viewBox="0 0 24 24"><path fill="#3b5f6d" d="M11 9h2V6h3V4h-3V1h-2v3H8v2h3v3zm-4 9c-1.1 0-1.99.9-1.99 2S5.9 22 7 22s2-.9 2-2-.9-2-2-2zm10 0c-1.1 0-1.99.9-1.99 2s.89 2 1.99 2 2-.9 2-2-.9-2-2-2zm-9.83-3.25l.03-.12.9-1.63h7.45c.75 0 1.41-.41 1.75-1.030l3.86-7.01L19.42 4h-.01l-1.1 2-2.76 5H8.53l-.13-.27L6.16 6l-.95-2-.94-2H1v2h2l3.6 7.59-1.35 2.45c-.16.28-.25.61-.25.96 0 1.1.9 2 2 2h12v-2H7.42c-.13 0-.25-.11-.25-.25z"/></svg><div class="t" style="left:63.60px;top:646.16px;font-size:18px;line-height:18px;color:#3f5e6c;font-weight:400;letter-spacing:-0.11px;">Inventory</div><svg class="i" style="left:20.30px;top:695.80px;width:29.8px;height:29.8px;" viewBox="0 0 24 24"><path fill="#3b5f6d" d="M4 10v7h3v-7H4zm6 0v7h3v-7h-3zM2 22h19v-3H2v3zm14-12v7h3v-7h-3zm-4.5-9L2 6v2h19V6l-9.5-5z"/></svg><div class="t" style="left:65.60px;top:706.16px;font-size:18px;line-height:18px;color:#3f5e6c;font-weight:400;letter-spacing:0.06px;">Administration</div><svg class="i" style="left:255.50px;top:695.00px;width:32px;height:32px;" viewBox="0 0 24 24"><path fill="#212121" d="M10 17l5-5-5-5v10z"/></svg><div class="t" style="left:110.40px;top:226.46px;font-size:18px;line-height:18px;color:#3f5e6c;font-weight:400;letter-spacing:-0.09px;">Dispatch</div><div class="t" style="left:110.40px;top:285.96px;font-size:18px;line-height:18px;color:#3f5e6c;font-weight:400;letter-spacing:-0.17px;">Flights</div><svg class="i" style="left:18px;top:766px;width:26px;height:26px" viewBox="0 0 26 26"><path d="M2.8,8.7 V4.5 Q2.8,3 4.3,3 H21.5 Q23,3 23,4.5 V21.2 Q23,22.7 21.5,22.7 H4.3 Q2.8,22.7 2.8,21.2 V17" fill="none" stroke="#2d5364" stroke-width="2.05"/><path d="M1.8,12.9 H16.6 M11.7,7.6 L17,12.9 L11.7,18.3" fill="none" stroke="#2d5364" stroke-width="2.05"/></svg><div class="t" style="left:61.30px;top:769.66px;font-size:18px;line-height:18px;color:#3f5e6c;font-weight:400;letter-spacing:-0.16px;">Logout</div><div class="a" style="left:26px;top:840px;width:134px;height:57px;border-radius:29px;background:#7fabd4;z-index:3"></div><svg class="i" style="left:51px;top:853.5px;width:29px;height:29px;z-index:3" viewBox="0 0 24 24"><path fill="#1f3a52" d="M11 18h2v-2h-2v2zm1-16C6.48 2 2 6.48 2 12s4.48 10 10 10 10-4.48 10-10S17.52 2 12 2zm0 18c-4.41 0-8-3.59-8-8s3.59-8 8-8 8 3.59 8 8-3.59 8-8 8zm0-14c-2.21 0-4 1.79-4 4h2c0-1.1.9-2 2-2s2 .9 2 2c0 2-3 1.75-3 5h2c0-2.250 3-2.5 3-5 0-2.21-1.79-4-4-4z"/></svg><div class="t" style="left:88.20px;top:859.27px;font-size:20px;line-height:20px;color:#1f3a52;font-weight:700;letter-spacing:0.17px;z-index:3">Help</div><div class="a" style="left:0;top:894px;width:299px;height:20px;background:#f1f1f1;z-index:2"></div><div class="a" style="left:21px;top:896px;width:246px;height:17px;background:#c1c1c1;z-index:2"></div><svg class="i" style="left:0;top:894.5px;width:20px;height:20px;z-index:2" viewBox="0 0 20 20"><path d="M13 5.5v9L7.5 10z" fill="#a3a3a3"/></svg><svg class="i" style="left:279px;top:894.5px;width:20px;height:20px;z-index:2" viewBox="0 0 20 20"><path d="M7 5.5v9l5.5-4.5z" fill="#505050"/></svg>
<div class="a" style="left:1899px;top:81px;width:21px;height:833px;background:#f1f1f1"></div><div class="a" style="left:1901px;top:102px;width:17px;height:209.5px;background:#c1c1c1"></div><svg class="i" style="left:1899px;top:81px;width:21px;height:21px" viewBox="0 0 21 21"><path d="M5.8 13.5h9.4l-4.7-4.8z" fill="#a3a3a3"/></svg><svg class="i" style="left:1899px;top:893px;width:21px;height:21px" viewBox="0 0 21 21"><path d="M5.8 7.5h9.4l-4.7 4.8z" fill="#505050"/></svg><div class="a" style="left:1825px;top:825px;width:70px;height:70px;border-radius:50%;background:#1976d2;box-shadow:0 3px 5px -1px rgba(0,0,0,.2),0 6px 10px 0 rgba(0,0,0,.14),0 1px 18px 0 rgba(0,0,0,.12)"></div><svg class="i" style="left:1851px;top:852px;width:18px;height:18px" viewBox="0 0 18 18"><path d="M7.8 0h2.4v18H7.8zM0 7.8h18v2.4H0z" fill="#fff"/></svg><svg class="i" style="left:250px;top:270px;width:80px;height:60px;overflow:visible;filter:drop-shadow(0 2px 2.5px rgba(0,0,0,.45))" viewBox="250 270 80 60"><path d="M261,299.5 C270,293 279,286 287.2,282.7 A20.2,20.2 0 1 1 287.2,316.3 C279,313 270,306 261,299.5 Z" fill="#f43f3f"/></svg><div class="t" style="left:281.00px;width:30px;text-align:center;top:290.97px;font-size:20px;line-height:20px;color:#ffffff;font-weight:400;">6</div><svg class="i" style="left:1185px;top:410px;width:24px;height:32px" viewBox="0 0 24 32"><path d="M8.1,18.1 L8.1,6 C8.1,4.8 8.8,4.2 9.85,4.2 C10.9,4.2 11.6,4.8 11.6,6 L11.6,9.5 C12.6,9.2 13.7,9.5 14.2,10 C15.2,9.8 16.6,10.2 17.3,11 C18.5,10.9 20.6,11.3 20.6,12.5 L20.6,20.6 C20.6,24.5 17.8,27.5 13.9,27.5 C11,27.5 9.5,26 7.7,23.5 L4.3,19.2 C3.6,18.3 3.8,17.2 4.6,16.8 C5.6,16.3 6.9,16.9 8.1,18.1 Z" fill="#fff" stroke="#14141c" stroke-width="1.45" stroke-linejoin="round"/><path d="M11.6,9.5 V14.7 M14.2,10 V14.8 M17.3,11 V15" stroke="#14141c" stroke-width="1.3"/></svg>
<div class="a" style="left:0;top:0;width:1920px;height:81px;background:#1976d2;box-shadow:0 2px 3px -1px rgba(0,0,0,.12),0 3px 12px 0 rgba(0,0,0,.16);z-index:5"><svg class="i" style="left:19.00px;top:26.00px;width:32px;height:32px;" viewBox="0 0 24 24"><path fill="#fff" d="M3 18h18v-2H3v2zm0-5h18v-2H3v2zm0-6v2h18V6H3z"/></svg><svg class="i" style="left:0;top:0;width:300px;height:81px" viewBox="0 0 300 81"><path fill="#0c1f66" d="M81,13.8 C92,13.2 120,16.3 150,19.3 C158,20.5 163,24.6 168.5,28.5 L186,28.5 L186,53.2 C181.5,53.2 178,50.2 174.5,47 L154.5,29.2 C151,26.2 147,25 140,24.3 C120,22.5 100,20.6 90,18.4 C85,17.3 81,15.7 81,13.8 Z"/><path fill="#0c1f66" transform="translate(370.6,0) scale(-1,1)" d="M81,13.8 C92,13.2 120,16.3 150,19.3 C158,20.5 163,24.6 168.5,28.5 L186,28.5 L186,53.2 C181.5,53.2 178,50.2 174.5,47 L154.5,29.2 C151,26.2 147,25 140,24.3 C120,22.5 100,20.6 90,18.4 C85,17.3 81,15.7 81,13.8 Z"/><path fill="#0c1f66" d="M100.8,24.5 C115,25.3 135,26.5 143.8,27.9 L147.2,32.3 C135,31.6 118,31 110,29 C105,27.8 102.5,26.5 100.8,24.5 Z"/><path fill="#0c1f66" transform="translate(370.6,0) scale(-1,1)" d="M100.8,24.5 C115,25.3 135,26.5 143.8,27.9 L147.2,32.3 C135,31.6 118,31 110,29 C105,27.8 102.5,26.5 100.8,24.5 Z"/><path fill="#0c1f66" d="M117.4,34.6 C130,35.2 143,36 150.6,37 L155,40.1 C145,39.9 132,39.5 126,38.3 C121,37.5 119,36.2 117.4,34.6 Z"/><path fill="#0c1f66" transform="translate(370.6,0) scale(-1,1)" d="M117.4,34.6 C130,35.2 143,36 150.6,37 L155,40.1 C145,39.9 132,39.5 126,38.3 C121,37.5 119,36.2 117.4,34.6 Z"/><path fill="#0c1f66" d="M132.3,42.2 C142,42.6 152,43.3 157.5,44.3 L161.8,46.6 C154,46.6 145,46.2 139,45.2 C135.5,44.5 133.5,43.5 132.3,42.2 Z"/><path fill="#0c1f66" transform="translate(370.6,0) scale(-1,1)" d="M132.3,42.2 C142,42.6 152,43.3 157.5,44.3 L161.8,46.6 C154,46.6 145,46.2 139,45.2 C135.5,44.5 133.5,43.5 132.3,42.2 Z"/><path fill="#0c1f66" d="M151.8,50.3 C165,50.5 176,58.9 186,58.9 L186,72.8 C169,72.5 156,63 151.8,50.3 Z"/><path fill="#0c1f66" transform="translate(370.6,0) scale(-1,1)" d="M151.8,50.3 C165,50.5 176,58.9 186,58.9 L186,72.8 C169,72.5 156,63 151.8,50.3 Z"/><path fill="#d30b0b" d="M185.50,16.00 L189.73,27.78 L202.24,28.16 L192.35,35.82 L195.85,47.84 L185.50,40.80 L175.15,47.84 L178.65,35.82 L168.76,28.16 L181.27,27.78 Z"/><path fill="#d30b0b" d="M165.13,55.68 L167.22,58.17 L170.32,57.17 L168.60,59.93 L170.51,62.57 L167.35,61.79 L165.43,64.42 L165.20,61.17 L162.10,60.16 L165.12,58.94 Z"/><path fill="#d30b0b" d="M178.36,60.04 L179.89,62.92 L183.13,62.58 L180.87,64.93 L182.20,67.91 L179.26,66.48 L176.84,68.66 L177.29,65.43 L174.47,63.80 L177.68,63.23 Z"/><path fill="#d30b0b" d="M192.54,60.64 L193.22,63.83 L196.43,64.40 L193.61,66.03 L194.06,69.26 L191.64,67.08 L188.70,68.51 L190.03,65.53 L187.77,63.18 L191.01,63.52 Z"/><path fill="#d30b0b" d="M206.37,55.48 L206.38,58.74 L209.40,59.96 L206.30,60.97 L206.07,64.22 L204.15,61.59 L200.99,62.37 L202.90,59.73 L201.18,56.97 L204.28,57.97 Z"/></svg><div class="a" style="left:1059px;top:11px;width:144px;height:60px;border:1px solid #d7dcf7;border-radius:7px"></div><svg class="i" style="left:1074px;top:27.8px;width:24px;height:26px" viewBox="0 0 24 26"><path fill="#fff" fill-rule="evenodd" d="M2.5,2.7 H21.1 Q23.6,2.7 23.6,5.2 V23.1 Q23.6,25.6 21.1,25.6 H2.5 Q0,25.6 0,23.1 V5.2 Q0,2.7 2.5,2.7 Z M3.8,9.4 V22.7 H20 V9.4 Z M4.2,0 H7 V3 H4.2 Z M16.4,0 H19.3 V3 H16.4 Z M5,11.2 H12.1 V18.2 H5 Z"/></svg><div class="t" style="left:1100.00px;top:30.23px;font-size:25px;line-height:25px;color:#fff;font-weight:400;letter-spacing:0.23px;">Booking</div><div class="a" style="left:1209px;top:11px;width:150px;height:60px;border:1px solid #d7dcf7;border-radius:7px"></div><svg class="i" style="left:1218.50px;top:26.10px;width:31.7px;height:31.7px;" viewBox="0 0 24 24"><path fill="#fff" d="M2.5 19h19v2h-19zm19.57-9.36c-.21-.8-1.04-1.28-1.84-1.06L14.92 10l-6.9-6.43-1.93.51 4.14 7.17-4.97 1.33-1.97-1.54-1.45.39 1.82 3.16.77 1.33 1.6-.43 5.31-1.42 4.35-1.16L21 11.49c.81-.23 1.28-1.05 1.07-1.85z"/></svg><div class="t" style="left:1249.40px;top:30.23px;font-size:25px;line-height:25px;color:#fff;font-weight:400;letter-spacing:0.27px;">Dispatch</div><div class="a" style="left:1366px;top:11px;width:131px;height:60px;border:1px solid #d7dcf7;border-radius:7px"></div><svg class="i" style="left:1376.20px;top:26.60px;width:30.7px;height:30.7px;" viewBox="0 0 24 24"><path fill="#fff" d="M18 17H6v-2h12v2zm0-4H6v-2h12v2zm0-4H6V7h12v2zM3 22l1.5-1.5L6 22l1.5-1.5L9 22l1.5-1.5L12 22l1.5-1.5L15 22l1.5-1.5L18 22l1.5-1.5L21 22V2l-1.5 1.5L18 2l-1.5 1.5L15 2l-1.5 1.5L12 2l-1.5 1.5L9 2 7.5 3.5 6 2 4.5 3.5 3 2v20z"/></svg><div class="t" style="left:1406.40px;top:30.23px;font-size:25px;line-height:25px;color:#fff;font-weight:400;letter-spacing:0.27px;">Invoice</div><div class="a" style="left:1504px;top:11px;width:183px;height:60px;border:1px solid #d7dcf7;border-radius:7px"></div><svg class="i" style="left:1514.60px;top:26.50px;width:30.5px;height:30.5px;" viewBox="0 0 24 24"><path fill="#fff" d="M11.8 10.9c-2.27-.59-3-1.2-3-2.15 0-1.09 1.01-1.85 2.7-1.85 1.78 0 2.44.85 2.5 2.1h2.21c-.07-1.72-1.12-3.3-3.21-3.81V3h-3v2.16c-1.94.42-3.5 1.68-3.5 3.61 0 2.31 1.91 3.46 4.7 4.13 2.5.6 3 1.48 3 2.41 0 .69-.49 1.79-2.7 1.79-2.06 0-2.87-.92-2.98-2.1h-2.2c.12 2.19 1.76 3.42 3.68 3.83V21h3v-2.15c1.95-.37 3.5-1.5 3.5-3.55 0-2.84-2.43-3.81-4.7-4.4z"/></svg><div class="t" style="left:1545.00px;top:30.23px;font-size:25px;line-height:25px;color:#fff;font-weight:400;letter-spacing:0.23px;">Transaction</div><div class="a" style="left:1694px;top:11px;width:135px;height:60px;border:1px solid #d7dcf7;border-radius:7px"></div><svg class="i" style="left:1704.40px;top:26.50px;width:30.5px;height:30.5px;" viewBox="0 0 24 24"><path fill="#fff" d="M11.8 10.9c-2.27-.59-3-1.2-3-2.15 0-1.09 1.01-1.85 2.7-1.85 1.78 0 2.44.85 2.5 2.1h2.21c-.07-1.72-1.12-3.3-3.21-3.81V3h-3v2.16c-1.94.42-3.5 1.68-3.5 3.61 0 2.31 1.91 3.46 4.7 4.13 2.5.6 3 1.48 3 2.41 0 .69-.49 1.79-2.7 1.79-2.06 0-2.87-.92-2.98-2.1h-2.2c.12 2.19 1.76 3.42 3.68 3.83V21h3v-2.15c1.95-.37 3.5-1.5 3.5-3.55 0-2.84-2.43-3.81-4.7-4.4z"/></svg><div class="t" style="left:1734.50px;top:30.23px;font-size:25px;line-height:25px;color:#fff;font-weight:400;letter-spacing:0.18px;">Closing</div><div class="a" style="left:1834.4px;top:21px;width:26px;height:26px;border-radius:50%;background:#fff"></div><svg class="i" style="left:1834.4px;top:21px;width:26px;height:26px" viewBox="0 0 26 26"><path d="M8.7,9.8 C8.7,6.6 10.6,5.1 13.1,5.1 C15.7,5.1 17.5,6.7 17.5,9.2 C17.5,12.6 13.9,12.9 13.9,16.8" fill="none" stroke="#1976d2" stroke-width="2.1"/><rect x="12.85" y="18.9" width="2.1" height="2.6" fill="#1976d2"/></svg><div class="a" style="left:1868px;top:24px;width:39px;height:39px;border-radius:11px;background:#e4e5e7;overflow:hidden"><div class="a" style="left:11.7px;top:8.2px;width:15.5px;height:16.5px;border-radius:50%;background:#b1b4b7"></div><div class="a" style="left:4.3px;top:24.8px;width:31px;height:26px;border-radius:50%;background:#b1b4b7"></div></div></div>
<div class="a" style="left:0;top:0;width:1920px;height:1px;background:#ede5df;z-index:6"></div>
</body></html>
